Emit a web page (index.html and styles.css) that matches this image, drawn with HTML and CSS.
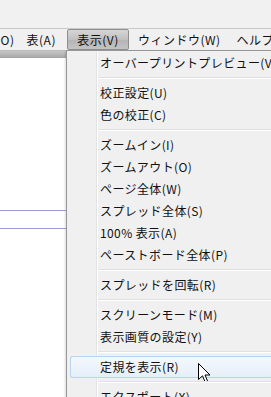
FILE: index.html
```html
<!DOCTYPE html>
<html lang="ja">
<head>
  <meta charset="UTF-8">
  <title>表示メニュー</title>
  <link rel="stylesheet" href="styles.css">
</head>
<body>

<div class="screen">
  <div class="titlearea"></div>

  <nav class="menubar">
    <span class="mb-item first">(O)</span>
    <span class="mb-item">表(A)</span>
    <span class="mb-item active">表示(V)</span>
    <span class="mb-item">ウィンドウ(W)</span>
    <span class="mb-item">ヘルプ(H)</span>
  </nav>

  <div class="workspace">
    <div class="doc">
      <div class="doc-tab"></div>
      <div class="guide guide-1"></div>
      <div class="guide guide-2"></div>
    </div>
  </div>

  <div class="dropdown">
    <div class="item">オーバープリントプレビュー(V)</div>
    <div class="sep"></div>
    <div class="item">校正設定(U)</div>
    <div class="item">色の校正(C)</div>
    <div class="sep"></div>
    <div class="item">ズームイン(I)</div>
    <div class="item">ズームアウト(O)</div>
    <div class="item">ページ全体(W)</div>
    <div class="item">スプレッド全体(S)</div>
    <div class="item">100% 表示(A)</div>
    <div class="item">ペーストボード全体(P)</div>
    <div class="sep"></div>
    <div class="item">スプレッドを回転(R)</div>
    <div class="sep"></div>
    <div class="item">スクリーンモード(M)</div>
    <div class="item">表示画質の設定(Y)</div>
    <div class="sep"></div>
    <div class="item hover">定規を表示(R)
      <svg class="cursor" width="13" height="21" viewBox="0 0 13 21">
        <path d="M0.5 0.5 L0.5 16.5 L4.5 12.8 L7.2 19.2 L9.6 18.2 L7 12 L12 12 Z" fill="#fff" stroke="#000" stroke-width="1" stroke-linejoin="miter"/>
      </svg>
    </div>
    <div class="sep"></div>
    <div class="item">エクスポート(X)</div>
  </div>
</div>

</body>
</html>
```

FILE: styles.css
```css
body {
  margin: 0;
  font-family: "Noto Sans CJK JP", "Noto Sans", sans-serif;
  font-size: 12px;
  color: #111;
  background: #fff;
}

.screen {
  position: relative;
  width: 271px;
  height: 397px;
  overflow: hidden;
}

.titlearea {
  height: 28px;
  background: #f1f1f1;
  border-bottom: 1px solid #c9c9c9;
}

.menubar {
  display: flex;
  align-items: center;
  height: 21px;
  background: #f0f0f0;
  border-bottom: 1px solid #bcbcbc;
  white-space: nowrap;
  letter-spacing: 0.5px;
}

.mb-item {
  flex: none;
  padding: 0 8px;
  line-height: 19px;
}

.mb-item.first {
  margin-left: -12px;
  margin-right: -4px;
}

.mb-item.active {
  width: 44px;
  margin: 0 1px 0 3px;
  text-align: center;
  border: 1px solid #8e8f8f;
  border-radius: 2px;
  background: linear-gradient(to bottom, #d6d6d6, #c0c0c0 50%, #b4b4b4 51%, #c4c4c4);
}

.workspace {
  display: flex;
}

.doc {
  position: relative;
  width: 66px;
  height: 346px;
  background: #fff;
}

.doc-tab {
  height: 7px;
  background: linear-gradient(to bottom, #c7c7c7, #a5a5a5);
}

.guide {
  position: absolute;
  left: 0;
  right: 0;
  height: 1px;
  background: #9c9ad8;
}

.guide-1 { top: 159px; }
.guide-2 { top: 177px; }

.dropdown {
  position: absolute;
  left: 66px;
  top: 50px;
  width: 260px;
  height: 360px;
  padding: 1px 0;
  background: #f0f0f0;
  border: 1px solid #979797;
  box-shadow: -1px 1px 2px rgba(0, 0, 0, 0.15);
  letter-spacing: 0.4px;
}

.dropdown::before {
  content: "";
  position: absolute;
  top: 0;
  bottom: 0;
  left: 29px;
  width: 1px;
  background: #e2e3e3;
  border-right: 1px solid #fff;
}

.item {
  position: relative;
  height: 22px;
  line-height: 22px;
  padding-left: 33px;
  white-space: nowrap;
}

.item.hover {
  margin-left: 3px;
  padding-left: 29px;
  height: 20px;
  line-height: 20px;
  border: 1px solid #b9d4f1;
  border-right: none;
  border-radius: 3px 0 0 3px;
  background: linear-gradient(to bottom, #f4f8fd, #e6eef9);
}

.sep {
  position: relative;
  height: 8px;
  margin-left: 31px;
}

.sep::after {
  content: "";
  position: absolute;
  left: 0;
  right: 0;
  top: 3px;
  height: 1px;
  background: #e0e0e0;
  border-bottom: 1px solid #fff;
}

.cursor {
  position: absolute;
  left: 127px;
  top: 6px;
}
```
